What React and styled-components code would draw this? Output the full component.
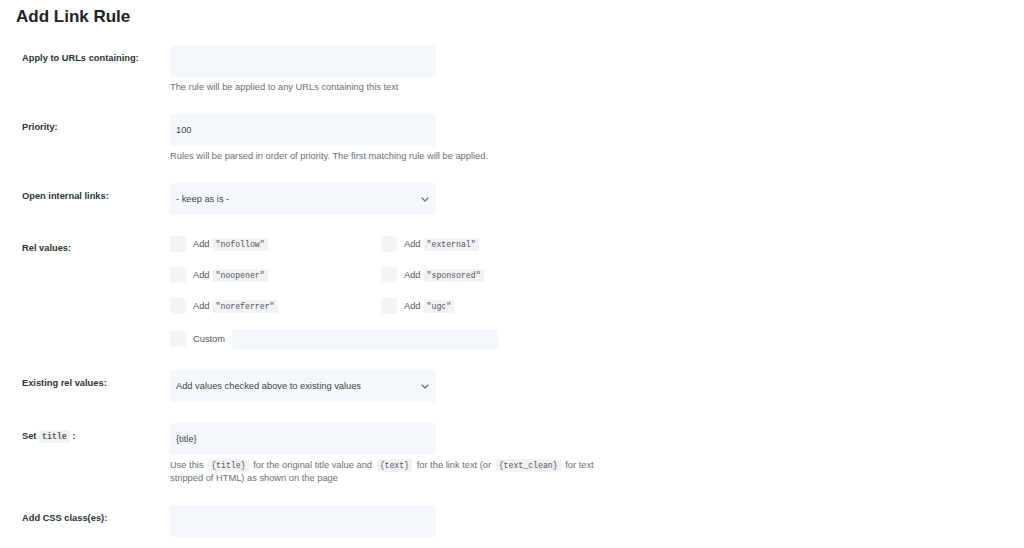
import styled, { createGlobalStyle } from "styled-components";

const GlobalStyle = createGlobalStyle`
  body {
    margin: 0;
    background: #ffffff;
    font-family: "Liberation Sans", Arial, sans-serif;
    color: #333;
  }
`;

const Page = styled.div`
  width: 1024px;
  min-height: 548px;
  box-sizing: border-box;
  padding: 7px 0 0 0;
`;

const Title = styled.h1`
  margin: 0 0 0 16px;
  font-size: 17px;
  line-height: 20px;
  font-weight: 700;
  color: #1d2327;
`;

const Form = styled.div`
  margin: 18px 0 0 22px;
  display: flex;
  flex-direction: column;
  gap: 21px;
`;

const Row = styled.div`
  display: grid;
  grid-template-columns: 148px 1fr;
  align-items: start;
`;

const Label = styled.div`
  padding-top: ${({ $top }) => $top ?? 7}px;
  font-size: 9.3px;
  line-height: 12px;
  font-weight: 700;
  color: #2c3338;
`;

const Field = styled.div`
  display: flex;
  flex-direction: column;
`;

const TextInput = styled.input`
  box-sizing: border-box;
  width: ${({ $w }) => $w ?? 266}px;
  height: ${({ $h }) => $h ?? 32}px;
  border: none;
  border-radius: 3px;
  background: #f5f8fa;
  padding: 0 6px;
  font-family: "Liberation Sans", Arial, sans-serif;
  font-size: 9.3px;
  color: #3c434a;
  outline: none;
`;

const SelectBox = styled.div`
  box-sizing: border-box;
  width: 266px;
  height: 32px;
  border-radius: 3px;
  background: #f5f8fa;
  padding: 0 7px 0 6px;
  display: flex;
  align-items: center;
  justify-content: space-between;
  font-size: 9.3px;
  color: #3c434a;
`;

const Desc = styled.p`
  margin: 4px 0 0 0;
  max-width: 450px;
  font-size: 9.3px;
  line-height: 12px;
  color: #6b6f73;
`;

const Code = styled.code`
  font-family: "Liberation Mono", "DejaVu Sans Mono", monospace;
  font-size: 8.2px;
  background: #f0f2f4;
  color: #50575e;
  padding: 2px 3px;
  margin: 0 ${({ $gap }) => $gap ?? 2}px;
  border-radius: 1px;
`;

const CheckGrid = styled.div`
  display: grid;
  grid-template-columns: 211px auto;
  row-gap: 15px;
`;

const CheckItem = styled.label`
  display: flex;
  align-items: center;
  gap: 7px;
  height: ${({ $wide }) => ($wide ? 20 : 16)}px;
  font-size: 9.3px;
  color: #50575e;
  grid-column: ${({ $wide }) => ($wide ? "1 / -1" : "auto")};
`;

const Box = styled.span`
  flex: none;
  width: 16px;
  height: 16px;
  border-radius: 2px;
  background: #f3f5f7;
`;

const Chevron = () => (
  <svg width="8" height="5" viewBox="0 0 8 5" fill="none">
    <path d="M1 1l3 3 3-3" stroke="#6b6f73" strokeWidth="1.2" strokeLinecap="round" strokeLinejoin="round" />
  </svg>
);

const relValues = [
  ["nofollow", "external"],
  ["noopener", "sponsored"],
  ["noreferrer", "ugc"],
];

export default function App() {
  return (
    <Page>
      <GlobalStyle />
      <Title>Add Link Rule</Title>
      <Form>
        <Row>
          <Label>Apply to URLs containing:</Label>
          <Field>
            <TextInput defaultValue="" />
            <Desc>The rule will be applied to any URLs containing this text</Desc>
          </Field>
        </Row>

        <Row>
          <Label>Priority:</Label>
          <Field>
            <TextInput defaultValue="100" />
            <Desc>Rules will be parsed in order of priority. The first matching rule will be applied.</Desc>
          </Field>
        </Row>

        <Row>
          <Label>Open internal links:</Label>
          <SelectBox>
            <span>- keep as is -</span>
            <Chevron />
          </SelectBox>
        </Row>

        <Row>
          <Label $top={6}>Rel values:</Label>
          <CheckGrid>
            {relValues.flat().map((v) => (
              <CheckItem key={v}>
                <Box />
                <span>
                  Add<Code $gap={3}>"{v}"</Code>
                </span>
              </CheckItem>
            ))}
            <CheckItem $wide>
              <Box />
              <span>Custom</span>
              <TextInput $h={20} defaultValue="" />
            </CheckItem>
          </CheckGrid>
        </Row>

        <Row>
          <Label>Existing rel values:</Label>
          <SelectBox>
            <span>Add values checked above to existing values</span>
            <Chevron />
          </SelectBox>
        </Row>

        <Row>
          <Label>
            Set <Code $gap={0}>title</Code> :
          </Label>
          <Field>
            <TextInput defaultValue="{title}" />
            <Desc>
              Use this <Code>{"{title}"}</Code> for the original title value and <Code>{"{text}"}</Code> for the link
              text (or <Code>{"{text_clean}"}</Code> for text
              <br />
              stripped of HTML) as shown on the page
            </Desc>
          </Field>
        </Row>

        <Row>
          <Label>Add CSS class(es):</Label>
          <TextInput defaultValue="" />
        </Row>
      </Form>
    </Page>
  );
}
